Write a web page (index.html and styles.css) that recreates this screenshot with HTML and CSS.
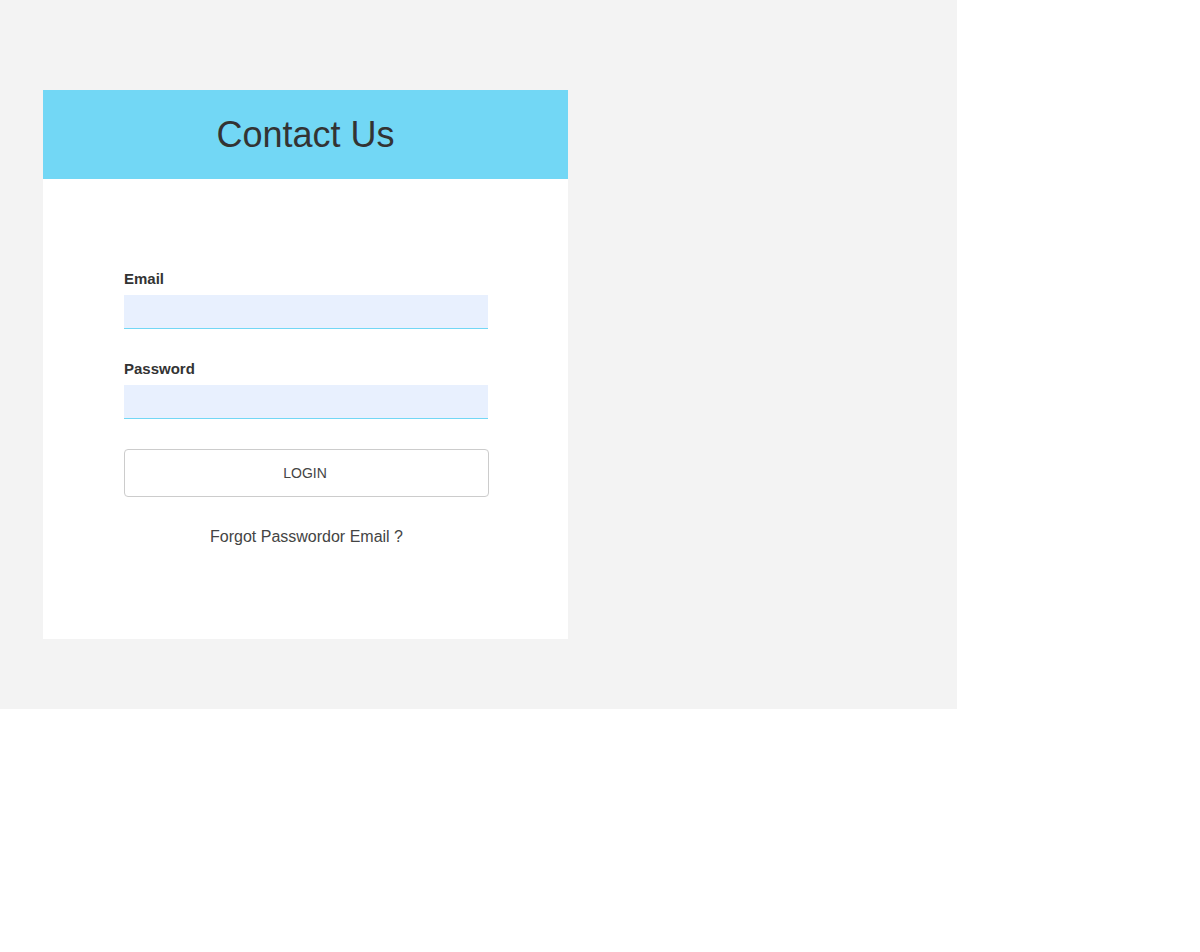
FILE: index.html
```html
<!DOCTYPE html>
<html>
<head>
<meta charset="utf-8">
<title>Contact Us</title>
<link rel="stylesheet" href="styles.css">
</head>
<body>
<div class="page">
  <div class="card">
    <div class="card-header">
      <h1 class="title">Contact Us</h1>
    </div>
    <form class="card-body">
      <label class="label" for="email">Email</label>
      <input class="input" id="email" type="text">
      <label class="label label-second" for="password">Password</label>
      <input class="input" id="password" type="password">
      <button class="btn" type="button">LOGIN</button>
      <p class="forgot">Forgot Passwordor Email ?</p>
    </form>
  </div>
</div>
</body>
</html>
```
FILE: styles.css
```css
html, body {
  margin: 0;
  padding: 0;
  background: #ffffff;
  font-family: "Liberation Sans", Arial, sans-serif;
  color: #333333;
}

.page {
  width: 957px;
  height: 709px;
  box-sizing: border-box;
  background: #f3f3f3;
  padding: 90px 0 0 43px;
}

.card {
  width: 525px;
  height: 549px;
  background: #ffffff;
  display: flex;
  flex-direction: column;
}

.card-header {
  height: 89px;
  background: #72d7f5;
  display: flex;
  align-items: center;
  justify-content: center;
}

.title {
  margin: 0;
  font-size: 36px;
  font-weight: normal;
  line-height: 40px;
  color: #333333;
}

.card-body {
  margin: 0;
  padding: 91px 80px 0 81px;
  display: flex;
  flex-direction: column;
}

.label {
  display: block;
  font-size: 15px;
  font-weight: bold;
  line-height: 17px;
  color: #333333;
  margin-bottom: 8px;
}

.label-second {
  margin-top: 31px;
}

.input {
  display: block;
  width: 364px;
  height: 34px;
  box-sizing: border-box;
  margin: 0;
  padding: 0 8px;
  border: none;
  border-bottom: 1px solid #72d7f5;
  background: #e8f0fe;
  font-family: inherit;
  font-size: 15px;
  outline: none;
}

.btn {
  display: block;
  width: 365px;
  height: 48px;
  margin-top: 30px;
  box-sizing: border-box;
  border: 1px solid #cccccc;
  border-radius: 4px;
  background: #ffffff;
  font-family: "Liberation Sans", Arial, sans-serif;
  font-size: 14px;
  color: #444444;
  padding: 0 3px 0 0;
  cursor: pointer;
}

.forgot {
  margin: 31px 0 0 0;
  width: 365px;
  text-align: center;
  font-size: 16px;
  line-height: 18px;
  color: #444444;
}
```
